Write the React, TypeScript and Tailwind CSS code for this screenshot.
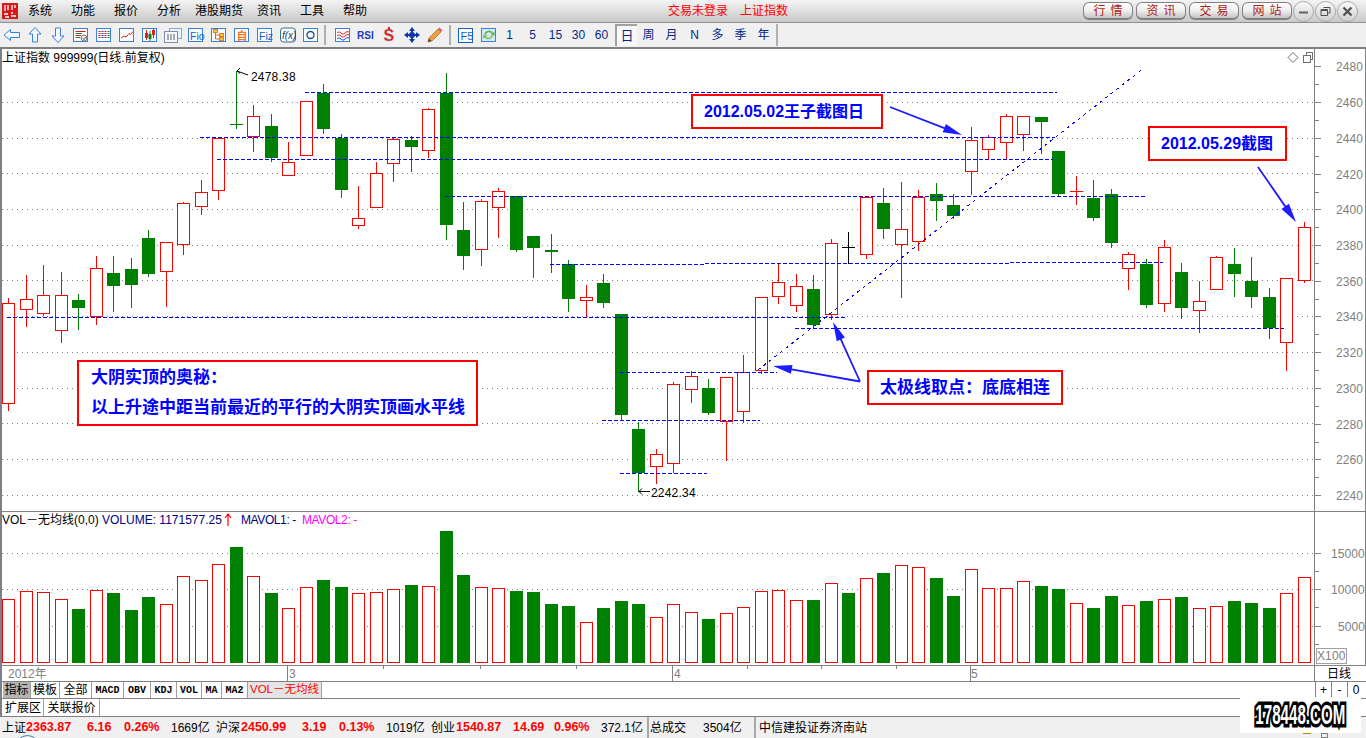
import React from "react";

type Candle = [string, number, number, number, number, number, number];
// type, left, bodyTop, bodyBottom, wickTop, wickBottom, volumeTop
const C: Candle[] = [
  ["r", 2, 303, 403, 298, 411, 599],
  ["r", 20, 299, 309, 275, 327, 591],
  ["r", 37, 295, 313, 265, 316, 592],
  ["r", 55, 295, 330, 272, 343, 599],
  ["g", 72, 300, 308, 294, 330, 609],
  ["r", 90, 268, 316, 256, 325, 590],
  ["g", 107, 273, 286, 256, 312, 593],
  ["g", 125, 269, 285, 258, 308, 610],
  ["g", 142, 238, 274, 230, 277, 597],
  ["r", 160, 242, 271, 242, 307, 604],
  ["r", 177, 203, 244, 202, 255, 576],
  ["r", 195, 192, 206, 180, 215, 580],
  ["r", 212, 138, 190, 138, 200, 564],
  ["gd", 230, 124, 124, 71, 129, 547],
  ["r", 247, 116, 136, 105, 152, 576],
  ["g", 265, 126, 158, 114, 162, 593],
  ["r", 282, 162, 175, 142, 175, 608],
  ["r", 300, 101, 155, 101, 155, 587],
  ["g", 317, 93, 129, 84, 134, 580],
  ["g", 335, 138, 190, 134, 198, 587],
  ["r", 352, 218, 225, 186, 229, 593],
  ["r", 370, 173, 207, 162, 207, 592],
  ["r", 387, 139, 163, 138, 182, 589],
  ["g", 405, 140, 147, 136, 172, 585],
  ["r", 422, 109, 150, 108, 158, 586],
  ["g", 440, 93, 225, 73, 240, 531],
  ["g", 457, 230, 256, 202, 270, 575],
  ["r", 475, 201, 249, 199, 266, 587],
  ["r", 492, 191, 207, 188, 238, 588],
  ["g", 510, 196, 250, 196, 252, 591],
  ["g", 527, 236, 248, 236, 278, 592],
  ["g", 545, 250, 252, 234, 273, 604],
  ["g", 562, 264, 299, 260, 312, 606],
  ["r", 580, 297, 300, 285, 317, 622],
  ["g", 597, 283, 303, 274, 308, 608],
  ["g", 615, 314, 415, 314, 420, 601],
  ["g", 632, 429, 473, 422, 492, 604],
  ["r", 650, 454, 466, 449, 484, 617],
  ["r", 667, 384, 463, 382, 473, 604],
  ["r", 685, 376, 389, 371, 403, 612],
  ["g", 702, 388, 413, 379, 415, 619],
  ["r", 720, 377, 421, 377, 461, 613],
  ["r", 737, 372, 411, 355, 423, 607],
  ["r", 755, 297, 370, 297, 374, 591],
  ["r", 772, 282, 296, 263, 304, 590],
  ["r", 790, 286, 305, 274, 312, 600],
  ["g", 807, 289, 325, 275, 328, 600],
  ["r", 825, 243, 314, 239, 320, 583],
  ["kd", 842, 247, 247, 232, 264, 593],
  ["r", 860, 197, 254, 197, 259, 578],
  ["g", 877, 203, 229, 188, 239, 573],
  ["r", 895, 229, 244, 182, 298, 565],
  ["r", 912, 197, 241, 190, 251, 567],
  ["g", 930, 194, 201, 183, 221, 578],
  ["g", 947, 205, 216, 194, 219, 596],
  ["r", 965, 140, 171, 127, 195, 569],
  ["r", 982, 137, 149, 135, 159, 588],
  ["r", 1000, 116, 142, 114, 159, 588],
  ["r", 1017, 116, 134, 116, 151, 581],
  ["g", 1035, 117, 122, 117, 154, 586],
  ["g", 1052, 151, 194, 151, 197, 589],
  ["rd", 1070, 191, 191, 176, 205, 603],
  ["g", 1087, 198, 218, 180, 221, 608],
  ["g", 1105, 194, 243, 189, 248, 596],
  ["r", 1122, 254, 268, 252, 290, 605],
  ["g", 1140, 264, 305, 259, 308, 601],
  ["r", 1158, 247, 303, 240, 312, 599],
  ["g", 1175, 272, 308, 263, 319, 597],
  ["r", 1193, 301, 310, 281, 333, 608],
  ["r", 1210, 257, 289, 256, 290, 606],
  ["g", 1228, 264, 274, 248, 297, 601],
  ["g", 1245, 281, 297, 257, 308, 603],
  ["g", 1263, 297, 328, 288, 339, 608],
  ["r", 1280, 278, 342, 278, 371, 593],
  ["r", 1298, 227, 280, 222, 283, 577],
];

const PRICES: [string, number][] = [
  ["2480", 66.5], ["2460", 102.5], ["2440", 138.5], ["2420", 174.5], ["2400", 209.5], ["2380", 245.5], ["2360", 281.5],
  ["2340", 316.5], ["2320", 352.5], ["2300", 388.5], ["2280", 424.5], ["2260", 459.5], ["2240", 495.5],
];
const GRID = [102.5, 138.5, 173.5, 209.5, 245.5, 280.5, 316.5, 352.5, 388.5, 423.5, 459.5, 495.5];

const DASH: [number, number, number, number][] = [
  [305, 92.5, 1057, 92.5],
  [200, 137.5, 1055, 137.5],
  [217, 159.5, 1053, 159.5],
  [445, 196.5, 1145, 196.5],
  [550, 264.5, 705, 264.5],
  [705, 263.5, 1010, 263.5],
  [1010, 262.5, 1163, 262.5],
  [7, 317.5, 845, 317.5],
  [795, 328.5, 1284, 328.5],
  [620, 372.5, 777, 372.5],
  [602, 420.5, 760, 420.5],
  [620, 473.5, 707, 473.5],
];

function Arrow({ x1, y1, x2, y2 }: { x1: number; y1: number; x2: number; y2: number }) {
  const dx = x2 - x1;
  const dy = y2 - y1;
  const len = Math.hypot(dx, dy);
  const ux = dx / len;
  const uy = dy / len;
  const bx = x2 - ux * 19;
  const by = y2 - uy * 19;
  const h = 4.5;
  const s = 0.9;
  const pts = [
    [x1 - uy * s, y1 + ux * s],
    [bx - uy * s, by + ux * s],
    [bx - uy * h, by + ux * h],
    [x2, y2],
    [bx + uy * h, by - ux * h],
    [bx + uy * s, by - ux * s],
    [x1 + uy * s, y1 - ux * s],
  ];
  return <polygon points={pts.map((p) => p.join(",")).join(" ")} fill="#1c1cff" />;
}

function PriceChart() {
  return (
    <svg className="block" width="1366" height="462" viewBox="0 49 1366 462">
      <g shapeRendering="crispEdges">
        {GRID.map((y) => (
          <line key={y} x1="2" x2="1313" y1={y} y2={y} stroke="#808080" strokeDasharray="1 4" />
        ))}
        {C.map(([t, l, top, bot, wt, wb], i) => {
          const color = t === "g" || t === "gd" ? "#008000" : t === "kd" ? "#000000" : "#ff0000";
          const cx = l + 6.5;
          if (t === "gd" || t === "rd" || t === "kd") {
            return (
              <g key={i} stroke={color}>
                <line x1={cx} x2={cx} y1={wt} y2={wb} />
                <line x1={l} x2={l + 13} y1={top + 0.5} y2={top + 0.5} />
              </g>
            );
          }
          if (t === "g") {
            return (
              <g key={i}>
                <line x1={cx} x2={cx} y1={wt} y2={wb} stroke={color} />
                <rect x={l} y={top} width="13" height={bot - top} fill={color} />
              </g>
            );
          }
          return (
            <g key={i}>
              <line x1={cx} x2={cx} y1={wt} y2={wb} stroke={color} />
              <rect x={l + 0.5} y={top + 0.5} width="12" height={bot - top} fill="#ffffff" stroke={color} />
            </g>
          );
        })}
        {DASH.map(([a, b, c, d], i) => (
          <line key={i} x1={a} y1={b} x2={c} y2={d} stroke="#0000ff" strokeDasharray="4 2" />
        ))}
        <line x1="758" y1="370" x2="1142" y2="69.5" stroke="#0000ff" strokeDasharray="3 4" />
        <line x1="1314.5" x2="1314.5" y1="49" y2="511" stroke="#808080" />
        <line x1="1365.5" x2="1365.5" y1="49" y2="511" stroke="#808080" />
        {PRICES.map(([, y]) => (
          <g key={y} stroke="#808080">
            <line x1="1315" x2="1321" y1={y} y2={y} />
            {y < 480 && <line x1="1315" x2="1319" y1={y + 18} y2={y + 18} />}
          </g>
        ))}
        <path d="M1288 57.5 L1293 52.5 L1298 57.5 L1293 62.5 Z" fill="none" stroke="#707070" shapeRendering="auto" />
        <path d="M1303.5 55.5 H1310.5 V62.5 H1303.5 Z M1306.5 55 V52.5 H1312.5 V59.5 H1311" fill="none" stroke="#707070" />
      </g>
      <Arrow x1={890} y1={107} x2={962} y2={135} />
      <Arrow x1={1258} y1={167} x2={1296} y2={222} />
      <Arrow x1={860} y1={381.5} x2={773} y2={366} />
      <Arrow x1={860} y1={381.5} x2={833} y2={322} />
      <path d="M237 71 L248 75 M237 71 L240 68 M237 71 L240 73.5" stroke="#000" fill="none" />
      <path d="M639 491.5 H650 M639 491.5 L642 488.5 M639 491.5 L642 494.5" stroke="#000" fill="none" />
      <g fontSize="12" fill="#000">
        <text x="251" y="81" letterSpacing="0.2">2478.38</text>
        <text x="651" y="497" letterSpacing="0.2">2242.34</text>
      </g>
      <g fontSize="12" fill="#808080">
        {PRICES.map(([p, y]) => (
          <text key={p} x="1336" y={y + 4.5} letterSpacing="0.1">{p}</text>
        ))}
      </g>
    </svg>
  );
}

function VolChart() {
  return (
    <svg className="block" width="1366" height="153" viewBox="0 512 1366 153">
      <g shapeRendering="crispEdges">
        {[553.5, 589.5, 626.5].map((y) => (
          <line key={y} x1="2" x2="1313" y1={y} y2={y} stroke="#808080" strokeDasharray="1 4" />
        ))}
        {C.map(([t, l, , , , , v], i) =>
          t === "g" || t === "gd" || t === "kd" ? (
            <rect key={i} x={l} y={v} width="13" height={663 - v} fill="#008000" />
          ) : (
            <rect key={i} x={l + 0.5} y={v + 0.5} width="12" height={662 - v} fill="#ffffff" stroke="#ff0000" />
          )
        )}
        <line x1="1314.5" x2="1314.5" y1="512" y2="665" stroke="#808080" />
        <line x1="1365.5" x2="1365.5" y1="512" y2="665" stroke="#808080" />
        {[553.5, 589.5, 626.5].map((y) => (
          <g key={y} stroke="#808080">
            <line x1="1315" x2="1321" y1={y} y2={y} />
            <line x1="1315" x2="1319" y1={y + 18} y2={y + 18} />
          </g>
        ))}
        <rect x="1316.5" y="648.5" width="30" height="15" fill="#fff" stroke="#a0a0a0" />
      </g>
      <g fontSize="12" fill="#808080">
        <text x="1331" y="558" letterSpacing="0.1">15000</text>
        <text x="1331" y="594" letterSpacing="0.1">10000</text>
        <text x="1338" y="631" letterSpacing="0.1">5000</text>
        <text x="1317" y="660" letterSpacing="0.1">X100</text>
      </g>
    </svg>
  );
}

function DateRow() {
  return (
    <svg className="block" width="1366" height="15" viewBox="0 666 1366 15">
      <g shapeRendering="crispEdges" stroke="#808080">
        {[287.5, 672.5, 970.5].map((x) => (
          <line key={x} x1={x} x2={x} y1="666" y2="681" />
        ))}
        {[383.5, 480.5, 576.5, 747.5, 821.5, 896.5].map((x) => (
          <line key={x} x1={x} x2={x} y1="666" y2="669" />
        ))}
        <line x1="1314.5" x2="1314.5" y1="666" y2="681" />
      </g>
      <g fontSize="12" fill="#808080">
        <text x="8" y="678">2012年</text>
        <text x="289" y="678">3</text>
        <text x="674" y="678">4</text>
        <text x="971" y="678">5</text>
      </g>
      <text x="1327" y="678" fontSize="12" fill="#000">日线</text>
    </svg>
  );
}

const S = "#3b7fdc";
function Ic({ children }: { children: React.ReactNode }) {
  return (
    <svg width="18" height="18" viewBox="0 0 18 18" className="block">
      {children}
    </svg>
  );
}
const Box = () => <rect x="1.5" y="2.5" width="14" height="13" fill="#fbfdff" stroke={S} />;
const Cell = ({ children, w = "w-[23px]" }: { children: React.ReactNode; w?: string }) => (
  <div className={`${w} h-full flex items-center justify-center shrink-0`}>{children}</div>
);

const ICONS: React.ReactNode[] = [
  <path key="a" d="M1 9 L7.5 3.5 V6.5 H16.5 V11.5 H7.5 V14.5 Z" fill="#f2f8ff" stroke={S} />,
  <path key="b" d="M9 1.5 L15 8 H11.5 V16 H6.5 V8 H3 Z" fill="#f2f8ff" stroke={S} />,
  <path key="c" d="M9 16.5 L15 10 H11.5 V2 H6.5 V10 H3 Z" fill="#f2f8ff" stroke={S} />,
  <g key="d"><Box /><path d="M3.5 5.5H13.5" stroke="#d02020" /><path d="M3.5 7.5H10" stroke="#208020" /><path d="M3.5 9.5H9" stroke="#d02020" /><path d="M3.5 11.5H8" stroke="#208020" /><circle cx="12" cy="12" r="3" fill="#e8e8e8" stroke="#808080" /><path d="M10.5 12 L12 13.5 L14.5 10.5" stroke="#606060" fill="none" /></g>,
  <g key="e"><Box /><path d="M4.5 5V13" stroke="#d02020" strokeWidth="2" strokeDasharray="1 1" /><path d="M7.5 5V13" stroke="#2040c0" strokeWidth="2" strokeDasharray="1 1" /><path d="M10.5 5V13" stroke="#d02020" strokeWidth="2" strokeDasharray="1 1" /><path d="M13.5 5V13" stroke="#208020" strokeWidth="2" strokeDasharray="1 1" /></g>,
  <g key="f"><Box /><path d="M3 12 L6 10 L8 11 L11 7.5 L12.5 8.5 L15 5.5" stroke="#e02020" fill="none" /></g>,
  <g key="g"><Box /><path d="M5.5 4V14" stroke="#d02020" /><rect x="4" y="7" width="3" height="5" fill="#e02020" /><path d="M9 5V15" stroke="#108010" /><rect x="7.5" y="8" width="3" height="5" fill="#108010" /><path d="M12.5 3V12" stroke="#d02020" /><rect x="11" y="4" width="3" height="5" fill="#e02020" /></g>,
  <g key="h"><rect x="5.5" y="2.5" width="12" height="10" fill="#eef4fb" stroke="#8aa8c8" /><rect x="0.5" y="5.5" width="13" height="11" fill="#f4f8fc" stroke="#7a90a8" /><path d="M3 9H11M3 11H11M3 13H11" stroke="#606060" strokeDasharray="2 1" /></g>,
  <g key="i"><Box /><text x="3" y="13.5" fontSize="10.5" fill="#1060c8">Fio</text></g>,
  <g key="j"><Box /><rect x="3.5" y="3.5" width="4" height="3" fill="#ffc040" stroke="#e08020" /><rect x="9.5" y="7.5" width="4" height="3" fill="#ffc040" stroke="#e08020" /><rect x="9.5" y="11.5" width="4" height="3" fill="#ffc040" stroke="#e08020" /><path d="M5.5 7V13H9.5M5.5 9H9.5" stroke="#d07020" fill="none" /></g>,
  <g key="k"><Box /><text x="3.5" y="13.5" fontSize="11" fontWeight="bold" fill="#f07828">自</text></g>,
  <g key="l"><Box /><text x="3" y="13.5" fontSize="10.5" fill="#1060c8">Fiz</text></g>,
  <g key="m"><rect x="1.5" y="2" width="15" height="14" rx="3" fill="#fbfdff" stroke="#307080" /><text x="3" y="13" fontSize="10" fontStyle="italic" fill="#204060">f(x)</text></g>,
  <g key="n"><Box /><circle cx="8.5" cy="9" r="3.5" fill="none" stroke="#205090" strokeWidth="1.4" /></g>,
];

const ICONS2: React.ReactNode[] = [
  <g key="a"><Box /><path d="M3 7 Q5 4.5 7 7 T11 7 T15 6" stroke="#e03030" fill="none" /><path d="M3 10 Q5 7.5 7 10 T11 10 T15 9" stroke="#e03030" fill="none" /><path d="M3 13 Q5 10.5 7 13 T11 13 T15 12" stroke="#3050d0" fill="none" /></g>,
  <text key="b" x="0" y="13" fontSize="10" fontWeight="bold" fill="#2038c0">RSI</text>,
  <g key="c"><text x="3.5" y="15" fontSize="16" fontWeight="bold" fill="#e02020" stroke="#a0a0a0" strokeWidth="0.4">S</text><path d="M9 1V4" stroke="#e02020" strokeWidth="2" /></g>,
  <g key="d" fill="#1038a8"><path d="M9 1 L12 5 H6 Z M9 17 L12 13 H6 Z M1 9 L5 6 V12 Z M17 9 L13 6 V12 Z" /><circle cx="9" cy="9" r="3" /><path d="M8 4H10V14H8Z M4 8H14V10H4Z" /></g>,
  <g key="e"><path d="M3 12 L12 3 L15 6 L6 15 L2 16 Z" fill="#f0a040" stroke="#a06828" strokeWidth="0.7" /><path d="M12 3 L13.5 1.5 L16.5 4.5 L15 6 Z" fill="#d86060" /><path d="M2 16 L3 12.5 L5.5 15 Z" fill="#504030" /></g>,
];

function Toolbar() {
  return (
    <div className="h-[26px] shrink-0 flex items-center bg-[#f0f0f0] border-b-2 border-[#808080] text-[#00288c] text-[12px]">
      {ICONS.map((n, i) => (
        <Cell key={i}><Ic>{n}</Ic></Cell>
      ))}
      <div className="w-[9px] h-[20px] flex justify-center shrink-0"><div className="w-[2px] h-full bg-[#b0b0b0] mr-[3px]" /></div>
      {ICONS2.map((n, i) => (
        <Cell key={i}><Ic>{n}</Ic></Cell>
      ))}
      <div className="w-[8px] h-[20px] flex justify-center shrink-0"><div className="w-[2px] h-full bg-[#b0b0b0]" /></div>
      <Cell>
        <Ic><rect x="1.5" y="2.5" width="14" height="14" fill="#fbfdff" stroke="#1060c8" /><text x="3.5" y="14" fontSize="11" fill="#1060c8">F5</text></Ic>
      </Cell>
      <Cell>
        <Ic><rect x="1.5" y="2.5" width="14" height="13" fill="#d8e8f8" stroke={S} /><path d="M4 8 A5 5 0 0 1 13 7 L14.5 5 V9.5 H10 L12 8 A3.5 3.5 0 0 0 5.5 9 Z" fill="#58b848" /><path d="M13 10 A5 5 0 0 1 4.5 11.5 L3 13 V9 H7.5 L6 10.5 A3.5 3.5 0 0 0 11.5 10 Z" fill="#80c858" /></Ic>
      </Cell>
      <div className="flex h-full items-center -ml-[2px]">
        {["1", "5", "15", "30", "60"].map((t) => (
          <Cell key={t}>{t}</Cell>
        ))}
      </div>
      <div className="w-[22px] h-[22px] ml-[2px] flex items-center justify-center border-l-2 border-t-2 border-[#a0a0a0] bg-[#f8f8f8] shrink-0 text-[13px]">日</div>
      {["周", "月", "N", "多", "季", "年"].map((t) => (
        <Cell key={t}>{t}</Cell>
      ))}
      <div className="w-[2px] h-[22px] bg-[#b0b0b0] ml-[1px]" />
    </div>
  );
}

const MENU = ["系统", "功能", "报价", "分析", "港股期货", "资讯", "工具", "帮助"];

function WinBtn({ children }: { children: React.ReactNode }) {
  return (
    <div className="w-[21px] h-[21px] rounded-full border border-[#a8a8a8] bg-gradient-to-b from-[#fafafa] to-[#cfcfcf] flex items-center justify-center ml-[1px]">
      <svg width="13" height="13" viewBox="0 0 13 13">{children}</svg>
    </div>
  );
}

function Menu() {
  return (
    <div className="h-[23px] shrink-0 flex items-center bg-gradient-to-b from-[#f4f4f4] to-[#c9c9c9] border-b border-[#909090] text-[12px]">
      <div className="w-[668px] flex items-center shrink-0">
        <svg width="16" height="16" viewBox="0 0 16 16" className="ml-[2px] mr-[10px] block">
          <rect width="16" height="16" fill="#d81818" />
          <path d="M3 2V8M6 2V7M10 2V7M13 2V5M2 11H6M9 10H11M9 13H14M3 14H7" stroke="#fff" strokeWidth="1.3" />
        </svg>
        <div className="flex gap-[19px] text-black">
          {MENU.map((m) => (
            <span key={m} className={m.length > 2 ? "-mx-[5px]" : ""}>{m}</span>
          ))}
        </div>
      </div>
      <div className="w-[415px] flex text-[#ff0000] shrink-0 gap-[12px]">
        <span>交易未登录</span>
        <span>上证指数</span>
      </div>
      <div className="flex gap-[3px] text-[#b02020]">
        {["行情", "资讯", "交易", "网站"].map((b) => (
          <div key={b} className="w-[50px] h-[18px] rounded-[6px] border border-[#808080] border-b-2 bg-gradient-to-b from-[#ffffff] via-[#efefef] to-[#c4c4c4] flex items-center justify-center tracking-[5px] pl-[5px]">
            {b}
          </div>
        ))}
      </div>
      <div className="flex">
        <WinBtn><path d="M2 7.5H11" stroke="#606060" strokeWidth="2" /></WinBtn>
        <WinBtn><path d="M4.5 2.5H11V8H9M2 4.5H8.5V10.5H2Z M2 5.5H8.5" fill="none" stroke="#505050" /></WinBtn>
        <WinBtn><path d="M2.5 2.5L10.5 10.5M10.5 2.5L2.5 10.5" stroke="#505050" strokeWidth="2.2" /></WinBtn>
      </div>
    </div>
  );
}

const TAB = "h-full flex items-center justify-center border-r border-[#a0a0a0] shrink-0";
const MONO = "font-['Liberation_Mono',monospace] text-[10px] font-bold";

function Status() {
  const red = "text-[#ff0000] font-bold text-[12.5px] shrink-0";
  const blk = "text-black shrink-0";
  return (
    <div className="h-[21px] shrink-0 relative flex items-center bg-[#f0f0f0] text-[12px] overflow-hidden">
      <span className={`${blk} ml-[2px] w-[24px]`}>上证</span>
      <span className={`${red} w-[61px]`}>2363.87</span>
      <span className={`${red} w-[37px]`}>6.16</span>
      <span className={`${red} w-[47px]`}>0.26%</span>
      <span className={`${blk} w-[45px]`}>1669亿</span>
      <span className={`${blk} w-[25px]`}>沪深</span>
      <span className={`${red} w-[61px]`}>2450.99</span>
      <span className={`${red} w-[37px]`}>3.19</span>
      <span className={`${red} w-[47px]`}>0.13%</span>
      <span className={`${blk} w-[45px]`}>1019亿</span>
      <span className={`${blk} w-[25px]`}>创业</span>
      <span className={`${red} w-[57px]`}>1540.87</span>
      <span className={`${red} w-[41px]`}>14.69</span>
      <span className={`${red} w-[47px]`}>0.96%</span>
      <span className={`${blk} w-[46px]`}>372.1亿</span>
      <span className="w-[2px] h-[21px] bg-[#a8a8a8] shrink-0" />
      <span className={`${blk} w-[54px] pl-[1px]`}>总成交</span>
      <span className={`${blk} w-[51px]`}>3504亿</span>
      <span className="w-[2px] h-[21px] bg-[#a8a8a8] shrink-0" />
      <span className={`${blk} pl-[3px]`}>中信建投证券济南站</span>
      <div className="absolute left-[15px] top-[18px] w-[25px] h-[25px] rounded-full border border-[#4878a8]" />
      <div className="absolute left-[1303px] top-[16px] w-[8px] h-[5px] border-t border-[#a09000]" />
      <div className="absolute left-[1321px] top-[16px] w-[7px] h-[5px] border border-[#808080]" />
    </div>
  );
}

export default function App() {
  return (
    <div className="w-[1366px] h-[738px] overflow-hidden relative flex flex-col bg-white text-black font-['Liberation_Sans','Noto_Sans_CJK_SC',sans-serif]">
      <Menu />
      <Toolbar />
      <div className="relative h-[463px] shrink-0 border-b border-[#808080] border-l-2 border-l-[#7a8088] -ml-0">
        <div className="-ml-[2px]"><PriceChart /></div>
        <div className="absolute left-0 top-[1px] text-[12px] leading-[16px] whitespace-nowrap">上证指数 999999(日线.前复权)</div>

        <div className="absolute left-[689px] top-[45px] w-[192px] h-[35px] border-2 border-[#ff0000] bg-white flex items-center pl-[11px] text-[16px] font-bold text-[#0000ff] whitespace-nowrap">
          2012.05.02王子截图日
        </div>
        <div className="absolute left-[1146px] top-[77px] w-[139px] h-[35px] border-2 border-[#ff0000] bg-white flex items-center pl-[11px] text-[16px] font-bold text-[#0000ff] whitespace-nowrap">
          2012.05.29截图
        </div>
        <div className="absolute left-[865px] top-[321px] w-[196px] h-[35px] border-2 border-[#ff0000] bg-white flex items-center pl-[11px] text-[17px] font-bold text-[#0000ff] whitespace-nowrap">
          太极线取点：底底相连
        </div>
        <div className="absolute left-[75px] top-[311px] w-[401px] h-[66px] border-2 border-[#ff0000] bg-white flex flex-col justify-center gap-[8px] pl-[12px] text-[17px] leading-[22px] font-bold text-[#0000ff] whitespace-nowrap">
          <div>大阴实顶的奥秘：</div>
          <div>以上升途中距当前最近的平行的大阴实顶画水平线</div>
        </div>
      </div>

      <div className="relative h-[154px] shrink-0 border-b border-[#808080] border-l-2 border-l-[#7a8088]">
        <div className="-ml-[2px]"><VolChart /></div>
        <div className="absolute left-0 top-0 h-[15px] flex items-center text-[12px] whitespace-nowrap">
          <span className="w-[100px]">VOL－无均线(0,0)</span>
          <span className="text-[#000080] w-[122px]">VOLUME: 1171577.25</span>
          <svg width="8" height="14" viewBox="0 0 8 14" className="block mr-[9px]">
            <path d="M4 13V2M1 5L4 1L7 5" stroke="#ff0000" fill="none" strokeWidth="1.2" />
          </svg>
          <span className="text-[#000080] w-[61px] tracking-[-0.4px]">MAVOL1: -</span>
          <span className="text-[#ff00ff] tracking-[-0.4px]">MAVOL2: -</span>
        </div>
      </div>

      <div className="h-[16px] shrink-0 border-b border-[#808080] border-l-2 border-l-[#7a8088]">
        <div className="-ml-[2px]"><DateRow /></div>
      </div>

      <div className="h-[17px] shrink-0 flex items-stretch border-b border-[#808080] border-l-2 border-l-[#7a8088] text-[12px] pl-[1px]">
        <div className={`${TAB} w-[28px] bg-[#b4b4b4]`}>指标</div>
        <div className={`${TAB} w-[29px]`}>模板</div>
        <div className={`${TAB} w-[32px]`}>全部</div>
        <div className={`${TAB} w-[32px] ${MONO}`}>MACD</div>
        <div className={`${TAB} w-[27px] ${MONO}`}>OBV</div>
        <div className={`${TAB} w-[26px] ${MONO}`}>KDJ</div>
        <div className={`${TAB} w-[25px] ${MONO}`}>VOL</div>
        <div className={`${TAB} w-[20px] ${MONO}`}>MA</div>
        <div className={`${TAB} w-[26px] ${MONO}`}>MA2</div>
        <div className={`${TAB} w-[74px] bg-[#e4e4e4] text-[#ff0000] whitespace-nowrap text-[11.5px]`}>VOL－无均线</div>
        <div className="ml-auto flex h-full w-[51px] text-[12px]">
          <div className="w-[16px] border-l border-[#808080] flex items-center justify-center">+</div>
          <div className="w-[16px] border-l border-[#808080] flex items-center justify-center">-</div>
          <div className="w-[17px] border-l border-[#808080] flex items-center justify-center">0</div>
        </div>
      </div>

      <div className="h-[18px] shrink-0 flex items-stretch border-b border-[#808080] border-l-2 border-l-[#7a8088] text-[12px] pl-[1px]">
        <div className={`${TAB} w-[41px]`}>扩展区</div>
        <div className={`${TAB} w-[56px]`}>关联报价</div>
      </div>

      <Status />

      <div className="absolute left-[1240px] top-[697px] w-[121px] h-[36px] bg-white flex items-center justify-center overflow-hidden">
        <div className="scale-x-[0.56] text-[27px] leading-[30px] font-bold text-white whitespace-nowrap [-webkit-text-stroke:7px_#000] [paint-order:stroke_fill]">
          178448.COM
        </div>
      </div>
    </div>
  );
}
